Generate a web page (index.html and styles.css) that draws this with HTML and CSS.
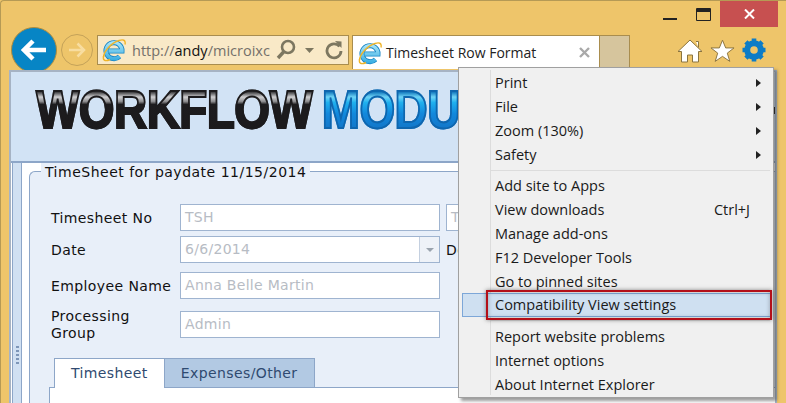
FILE: index.html
```html
<!DOCTYPE html>
<html lang="en">
<head>
<meta charset="utf-8">
<title>Timesheet Row Format</title>
<link rel="stylesheet" href="styles.css">
</head>
<body>
<svg class="defs" width="0" height="0" aria-hidden="true">
  <defs>
    <linearGradient id="ieBlue" gradientUnits="userSpaceOnUse" x1="0" y1="4" x2="0" y2="22">
      <stop offset="0" stop-color="#a8e4f8"/><stop offset="1" stop-color="#38ade2"/>
    </linearGradient>
    <symbol id="ie" viewBox="0 0 24 24">
      <path d="M6.500 13H20A8 8 0 1 0 17.500 18.500" fill="none" stroke="#1583c4" stroke-width="5"/>
      <path d="M6.500 13H20A8 8 0 1 0 17.500 18.500" fill="none" stroke="url(#ieBlue)" stroke-width="3.400"/>
      <path d="M1.500 19C2 13 9 5 17 2.500c4-1.200 7-.8 6 4" fill="none" stroke="#f0b428" stroke-width="1.400"/>
      <path d="M1.800 17.500c-1.500 4.500 1 6.500 6.200 4" fill="none" stroke="#f0b428" stroke-width="1.400"/>
    </symbol>
  </defs>
</svg>
<div class="window">
  <div class="titlebar">
    <span class="win-btn"><svg width="15" height="15" viewBox="0 0 15 15"><path d="M0 11h14" stroke="#222" stroke-width="2"/></svg></span>
    <span class="win-btn"><svg width="15" height="14" viewBox="0 0 15 14"><path d="M.5.500h14v12H.5z" fill="none" stroke="#222"/><path d="M0 2.500h15" stroke="#222" stroke-width="3"/></svg></span>
    <span class="win-close"><svg width="11" height="10" viewBox="0 0 11 10"><path d="M1 .5l9 9M10 .5l-9 9" stroke="#fff" stroke-width="2"/></svg></span>
  </div>
  <div class="toolbar">
    <span class="back"><svg width="26" height="24" viewBox="0 0 26 24"><path d="M12 3L3 12l9 9M3 12h22" fill="none" stroke="#fff" stroke-width="4.500"/></svg></span>
    <span class="forward"><svg width="18" height="16" viewBox="0 0 18 16"><path d="M9.500 1.500L16 8l-6.500 6.500M16 8H1" fill="none" stroke="#f8dda0" stroke-width="2.500"/></svg></span>
    <div class="address">
      <svg class="ie-icon" width="24" height="24"><use href="#ie"/></svg>
      <span class="url">http://<b>andy</b>/microixc</span>
      <svg class="tool-icon" width="20" height="22" viewBox="0 0 20 22"><circle cx="12" cy="8" r="6" fill="none" stroke="#7d7760" stroke-width="2.600"/><path d="M8 12.500L2 19" stroke="#7d7760" stroke-width="3.400"/></svg>
      <svg class="drop-icon" width="9" height="5" viewBox="0 0 9 5"><path d="M0 0h9L4.500 5z" fill="#7d7760"/></svg>
      <svg class="reload-icon" width="18" height="20" viewBox="0 0 18 20"><path d="M14.500 6.500A7 7 0 1 0 16 11" fill="none" stroke="#7d7760" stroke-width="2.800"/><path d="M10 1l6.500 .5v6.500z" fill="#7d7760"/></svg>
    </div>
    <div class="tab">
      <svg class="ie-icon" width="24" height="24"><use href="#ie"/></svg>
      <span class="tab-title">Timesheet Row Format</span>
      <svg class="tab-x" width="11" height="11" viewBox="0 0 11 11"><path d="M1 1l9 9M10 1l-9 9" stroke="#a9a9a9" stroke-width="2.400"/></svg>
    </div>
    <div class="newtab"></div>
    <div class="actions">
      <svg class="home" width="26" height="24" viewBox="0 0 26 24"><path d="M13 1L25 12.500h-3.500V23h-6v-7h-5v7h-6V12.500H1zM19 2.500h2.500v6" fill="#fff" stroke="#8a7440" stroke-width="1"/></svg>
      <svg width="25" height="24" viewBox="0 0 26 24"><path d="M13 .8l3.300 8h8.700l-7 5.400 2.600 8.600L13 17.600l-7.600 5.200L8 14.200 1 8.800h8.700z" fill="#fff" stroke="#8a7440" stroke-width="1"/></svg>
      <svg class="gear" width="24" height="24" viewBox="0 0 24 24"><circle cx="12" cy="12" r="6.800" fill="none" stroke="#0d7cc6" stroke-width="6"/><path d="M12 .5v23M.5 12h23M3.900 3.900l16.200 16.200M20.100 3.900L3.900 20.100" stroke="#0d7cc6" stroke-width="4.600" stroke-dasharray="5 13 5"/></svg>
    </div>
  </div>
  <div class="page">
    <header class="banner"><div class="logo-wrap"><span class="logo logo-dark">WORKFLOW</span> <span class="logo logo-blue">MODULE</span></div><i class="logo-end"></i></header>
    <div class="panel">
      <div class="rail"><span class="grip"></span></div>
      <div class="gap"></div>
      <fieldset class="sheet">
        <legend>TimeSheet for paydate 11/15/2014</legend>
        <div class="form">
          <label class="label">Timesheet No</label>
          <div class="field">TSH</div>
          <div class="field cut">T</div>
          <label class="label row-date">Date</label>
          <div class="field combo"><span>6/6/2014</span><i class="arrow"></i></div>
          <label class="label plain">De</label>
          <label class="label spaced">Employee Name</label>
          <div class="field spaced">Anna Belle Martin</div>
          <i></i>
          <label class="label group-label">Processing Group</label>
          <div class="field group-field">Admin</div>
          <i></i>
        </div>
        <div class="tabs">
          <span class="ftab active">Timesheet</span>
          <span class="ftab">Expenses/Other</span>
        </div>
        <div class="tab-body"></div>
      </fieldset>
    </div>
  </div>
  <nav class="menu">
    <div class="item"><span>Print</span><i class="sub"></i></div>
    <div class="item"><span>File</span><i class="sub"></i></div>
    <div class="item"><span>Zoom (130%)</span><i class="sub"></i></div>
    <div class="item"><span>Safety</span><i class="sub"></i></div>
    <hr class="sep">
    <div class="item"><span>Add site to Apps</span></div>
    <div class="item"><span>View downloads</span><em>Ctrl+J</em></div>
    <div class="item"><span>Manage add-ons</span></div>
    <div class="item"><span>F12 Developer Tools</span></div>
    <div class="item"><span>Go to pinned sites</span></div>
    <div class="item current"><span>Compatibility View settings</span><b class="callout"></b></div>
    <hr class="sep second">
    <div class="item"><span>Report website problems</span></div>
    <div class="item"><span>Internet options</span></div>
    <div class="item"><span>About Internet Explorer</span></div>
  </nav>
</div>
</body>
</html>
```
FILE: styles.css
```css
* { box-sizing: border-box; }
html, body { margin: 0; padding: 0; }
body { width: 786px; height: 403px; overflow: hidden; background: #eec56a; }
.defs { position: absolute; }
.window {
  position: relative; width: 786px; height: 403px; overflow: hidden;
  background: #eec56a; border-top: 1px solid #b59a55; border-left: 1px solid #b59a55;
  border-top-left-radius: 4px;
  font-family: "Open Sans", "Noto Sans", sans-serif;
}
.titlebar { height: 26px; display: flex; justify-content: flex-end; align-items: flex-start; padding-right: 8px; }
.win-btn { width: 32px; height: 22px; padding-top: 7px; display: flex; justify-content: center; margin-right: 1px; }
.win-close { width: 58px; height: 26px; background: #c75050; display: flex; align-items: center; justify-content: center; }
.toolbar { height: 43px; display: flex; align-items: flex-start; padding-top: 8px; }
.back {
  width: 46px; height: 46px; border-radius: 50%; background: #0785c5; border: 1px solid #b08c3c;
  margin: -8px 0 0 10px; display: flex; align-items: center; justify-content: center; flex: none;
}
.forward {
  width: 32px; height: 32px; border-radius: 50%; border: 1px solid #c4a259;
  margin: -1px 0 0 4px; display: flex; align-items: center; justify-content: center; flex: none;
}
.address {
  width: 252px; height: 30px; margin-left: 4px; background: #f9e9c7; border: 1px solid #a98d4e;
  display: flex; align-items: center; padding: 0 6px 0 4px; flex: none;
}
.address .ie-icon { flex: none; }
.url { font-size: 14.500px; color: #74706a; margin-left: 6px; width: 137px; white-space: nowrap; }
.url b { font-weight: 400; color: #111; }
.tool-icon { flex: none; margin-left: 7px; }
.drop-icon { flex: none; margin-left: 9px; }
.reload-icon { flex: none; margin-left: 11px; }
.tab {
  width: 248px; height: 34px; margin-left: 3px; background: #fff; border: 1px solid #a98d4e; border-bottom: 0;
  display: flex; align-items: center; padding: 0 9px 0 5px; flex: none;
}
.tab-title { font-size: 14px; color: #222; margin-left: 4px; flex: 1; white-space: nowrap; }
.tab-x { flex: none; }
.newtab { width: 30px; height: 34px; background: #d6c59d; border: 1px solid #a98d4e; border-left: 0; border-bottom: 0; flex: none; }
.actions { display: flex; align-items: center; gap: 7px; margin-left: 47px; padding-top: 4px; }
.gear { margin-top: -2px; }
.page {
  margin-left: 8px; width: 768px; height: 333px; background: #e8eff9;
  border: 1px solid #a6b3c4; border-width: 2px 2px 0; position: relative;
}
.banner {
  height: 91px; background: #d2e3f5; border-bottom: 2px solid #8da6c8; padding: 14px 0 0 25px;
  white-space: nowrap; overflow: hidden;
}
.logo-wrap {
  display: flex; gap: 11px; transform: scaleX(.85); transform-origin: 0 0;
  font: 700 54px/46px "Liberation Sans", Arial, sans-serif;
}
.logo { -webkit-background-clip: text; background-clip: text; color: transparent; -webkit-text-stroke-width: 2px; letter-spacing: -.6px; }
.logo-dark { background-image: linear-gradient(#2c2c2e 0, #2c2c2e 12%, #d0d0d2 24%, #8a8a8c 34%, #1d1c1e 40%, #1b1a1c 100%); -webkit-text-stroke-color: #1c1b1d; }
.logo-blue { background-image: linear-gradient(#0a70b8 0, #0a70b8 12%, #6fd4f6 24%, #1fb0ee 36%, #1288dc 60%, #1272c4 100%); -webkit-text-stroke-color: #0f66ae; }
.logo-end { position: absolute; left: 762px; top: 35px; width: 2px; height: 7px; background: #111; }
.panel { display: flex; height: 240px; background: #fff; }
.rail { width: 10px; margin-left: 1px; background: #d0e0f2; border: 1px solid #8da6c8; border-top: 0; border-bottom: 0; position: relative; flex: none; }
.grip { position: absolute; left: 3px; top: 183px; width: 3px; height: 18px; background: repeating-linear-gradient(#7d96b8 0 2px, transparent 2px 4px); }
.gap { width: 7px; flex: none; }
.sheet {
  flex: 1; margin: 0; padding: 0 0 0 21px; min-width: 0; background: #e8eff9;
  border: 1px solid #8da6c8; border-right: 0; border-bottom: 0; border-top-left-radius: 6px;
}
.sheet legend {
  font: 14px/15px "DejaVu Sans", sans-serif; color: #111; background: #e8eff9; padding: 2px 4px 0; margin-left: -10px;
  white-space: nowrap; letter-spacing: .5px;
}
.form {
  display: grid; grid-template-columns: 129px 260px 40px; align-items: center;
  font: 14px/17px "DejaVu Sans", sans-serif; margin-top: 24px; width: 440px;
}
.label { color: #111; letter-spacing: .4px; padding-top: 1px; }
.plain, .row-date { margin-top: 5px; }
.plain { margin-left: 6px; }
.field {
  height: 27px; background: #fff; border: 1px solid #9fb4d0; padding: 0 4px; color: #b7bcc4;
  line-height: 25px; font-size: 14px; letter-spacing: .3px;
}
.cut { margin-left: 6px; border-right: 0; }
.combo { display: flex; justify-content: space-between; margin-top: 5px; padding-right: 0; }
.arrow { width: 20px; height: 25px; background: #eef2f8; border-left: 1px solid #c4d0e0; position: relative; display: block; }
.arrow::after { content: ""; position: absolute; left: 6px; top: 11px; border: 4px solid transparent; border-top: 4px solid #9aa3ae; border-bottom: 0; }
.spaced { margin-top: 9px; }
.group-label { align-self: start; max-width: 100px; margin-top: 8px; }
.group-field { align-self: start; margin-top: 12px; }
.tabs { display: flex; margin: 16px 0 0; height: 30px; position: relative; z-index: 1; padding-left: 3px; }
.ftab {
  font: 14px/29px "DejaVu Sans", sans-serif; color: #2f4a70; padding: 0 16px; background: #b2c9e3;
  border: 1px solid #8da6c8; border-left: 0; letter-spacing: .4px;
}
.ftab.active { background: #fff; border-left: 1px solid #8da6c8; border-bottom: 0; }
.tab-body { margin: -1px 0 0 -2px; height: 20px; background: #fff; border: 1px solid #8da6c8; border-right: 0; border-bottom: 0; }
.menu {
  position: absolute; left: 457px; top: 66px; width: 316px; height: 331px; background: #f0f0f0;
  border: 1px solid #a0a0a0; box-shadow: 3px 3px 3px rgba(60, 60, 60, .5); padding: 3px 2px 0;
  font-size: 14.500px; color: #1a1a1a;
}
.menu::before { content: ""; position: absolute; left: 31px; top: 2px; bottom: 2px; width: 1px; background: #dcdcdc; }
.item { height: 24px; line-height: 24px; display: flex; padding: 0 0 0 34px; align-items: center; position: relative; }
.item span { flex: none; }
.item em { font-style: normal; margin-left: auto; margin-right: 21px; }
.sub { margin-left: auto; margin-right: 10px; border-left: 5px solid #222; border-top: 4px solid transparent; border-bottom: 4px solid transparent; }
.sep { height: 1px; border: 0; background: #dcdcdc; margin: 3px 1px 3px 30px; }
.sep.second { margin: 3px 1px 4px 30px; }
.current { background: #cfe0f1; border: 1px solid #7da7d8; border-right: 0; width: 309px; margin: -1px 0 0 1px; padding-left: 32px; }
.callout {
  position: absolute; left: 23px; top: -4px; width: 286px; height: 30px; border: 2px solid #b30f18;
  box-shadow: 0 0 4px rgba(40, 40, 40, .55), inset 0 0 4px rgba(40, 40, 40, .35);
}
```
